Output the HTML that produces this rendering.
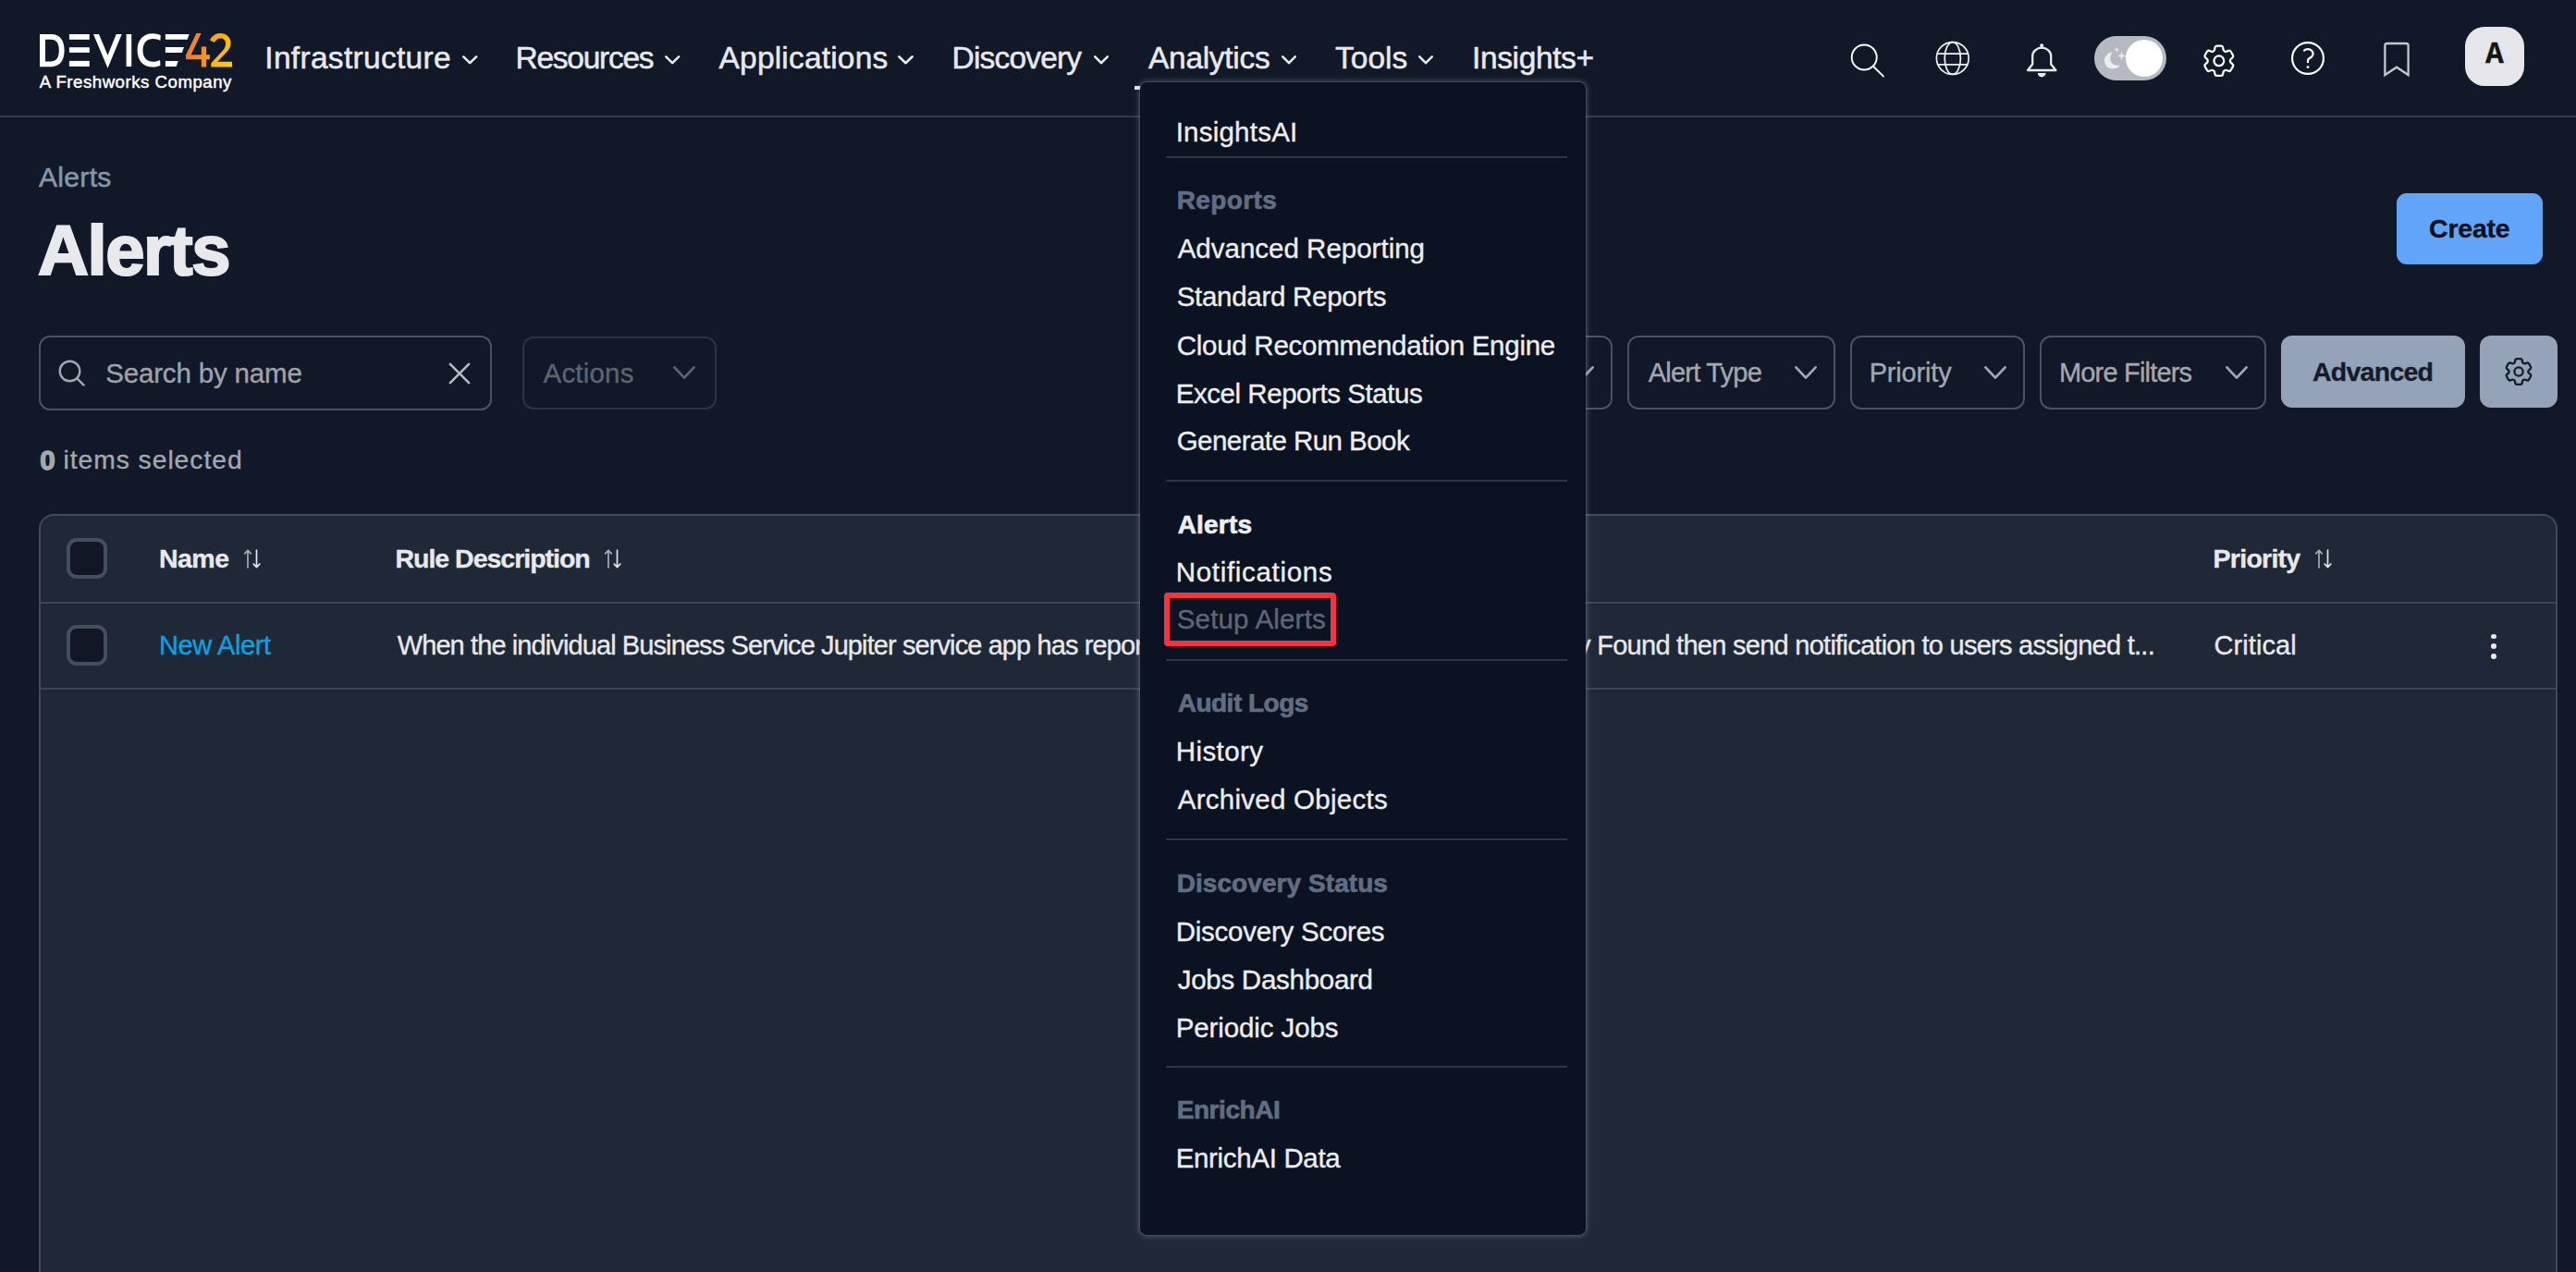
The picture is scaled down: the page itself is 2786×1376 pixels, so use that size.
<!DOCTYPE html>
<html><head><meta charset="utf-8"><title>Alerts</title>
<style>
html,body{margin:0;padding:0;}
body{width:2786px;height:1376px;overflow:hidden;position:relative;background:#111827;font-family:"Liberation Sans", sans-serif;-webkit-text-stroke-width:0.35px;}
</style></head><body>
<div style="position:absolute;left:0px;top:125px;width:2786px;height:2px;background:#343a47"></div>
<svg style="position:absolute;left:40px;top:34px;" width="215" height="42" viewBox="40 34 215 42" fill="none">
<path d="M43 37 H55.5 C65 37 69.6 44 69.6 54.6 C69.6 65.2 65 72.2 55.5 72.2 H43 Z M49 42.7 V66.4 H55.3 C61 66.4 63.8 62.5 63.8 54.6 C63.8 46.7 61 42.7 55.3 42.7 Z" fill="#fff" fill-rule="evenodd"/>
<rect x="74.9" y="37" width="21.9" height="5.8" fill="#fff"/>
<rect x="74.9" y="51.2" width="21.9" height="5.7" fill="#fff"/>
<rect x="74.9" y="65.9" width="21.9" height="6" fill="#fff"/>
<path d="M101 37 H107 L116.5 59.8 L125.7 37 H131.7 L116.5 73.8 Z" fill="#fff"/>
<rect x="136.6" y="37" width="5.6" height="35" fill="#fff"/>
<path d="M173.8 38.2 C171.2 37 168.4 36.3 165.3 36.3 C154.5 36.3 148.6 43.8 148.6 54.5 C148.6 65.2 154.5 72.6 165.3 72.6 C168.3 72.6 171 72 173.4 70.8 L173.1 65 C171 66.1 168.5 66.8 165.8 66.8 C158.6 66.8 154.5 62.4 154.5 54.5 C154.5 46.6 158.6 42.1 165.8 42.1 C168.6 42.1 171.2 42.8 173.3 43.9 Z" fill="#fff"/>
<path d="M178.9 37 H204.7 L202.6 42.8 H178.9 Z" fill="#fff"/>
<path d="M178.9 51 H199 L196.8 56.9 H178.9 Z" fill="#fff"/>
<path d="M178.9 66.1 H192.9 L190.5 71.9 H178.9 Z" fill="#fff"/>
<path d="M212.4 36 H217.6 L206.6 59.3 H217.8 V50.5 H223.1 V59.3 H226.9 V64.2 H223.1 V72.6 H217.8 V64.2 H201 V59.6 Z" fill="url(#lg4)"/>
<path d="M227 43.4 C229 38.6 233.4 36 238.6 36 C245 36 249.6 40.2 249.6 46.5 C249.6 51 247.6 54 244 57.4 L235.2 66.8 H251 V72.6 H228.3 V68.2 L240.2 55.6 C243 52.6 244 50.5 244 47.3 C244 43.5 241.6 41.6 238.5 41.6 C235.5 41.6 233.5 43.2 232 46 Z" fill="url(#lg2)"/>
<defs><linearGradient id="lg4" x1="0" y1="0" x2="1" y2="0"><stop offset="0" stop-color="#f07628"/><stop offset="1" stop-color="#f49a28"/></linearGradient>
<linearGradient id="lg2" x1="0" y1="0" x2="1" y2="1"><stop offset="0" stop-color="#f5a01c"/><stop offset="1" stop-color="#fbcf10"/></linearGradient></defs>
</svg>
<div style="position:absolute;left:42.80px;top:80.49px;font-size:18.6px;line-height:18.6px;font-weight:400;color:#ffffff;white-space:nowrap;letter-spacing:0.537px;-webkit-text-stroke:0.45px #ffffff;">A Freshworks Company</div>
<div style="position:absolute;left:286.30px;top:46.03px;font-size:33.5px;line-height:33.5px;font-weight:400;color:#e8e9ec;white-space:nowrap;letter-spacing:0.308px;-webkit-text-stroke:0.5px #e8e9ec;">Infrastructure</div>
<svg style="position:absolute;left:497.5px;top:58px;" width="20.5" height="13.5" viewBox="0 0 20.5 13.5" fill="none"><polyline points="3.3,3.3 10.25,10.2 17.2,3.3" stroke="#e8e9ec" stroke-width="2.6" stroke-linecap="round" stroke-linejoin="round"/></svg>
<div style="position:absolute;left:557.50px;top:46.03px;font-size:33.5px;line-height:33.5px;font-weight:400;color:#e8e9ec;white-space:nowrap;letter-spacing:-1.250px;-webkit-text-stroke:0.5px #e8e9ec;">Resources</div>
<svg style="position:absolute;left:716.6px;top:58px;" width="20.399999999999977" height="13.5" viewBox="0 0 20.399999999999977 13.5" fill="none"><polyline points="3.3,3.3 10.199999999999989,10.2 17.099999999999977,3.3" stroke="#e8e9ec" stroke-width="2.6" stroke-linecap="round" stroke-linejoin="round"/></svg>
<div style="position:absolute;left:777.60px;top:46.03px;font-size:33.5px;line-height:33.5px;font-weight:400;color:#e8e9ec;white-space:nowrap;letter-spacing:0.182px;-webkit-text-stroke:0.5px #e8e9ec;">Applications</div>
<svg style="position:absolute;left:969px;top:58px;" width="21" height="13.5" viewBox="0 0 21 13.5" fill="none"><polyline points="3.3,3.3 10.5,10.2 17.7,3.3" stroke="#e8e9ec" stroke-width="2.6" stroke-linecap="round" stroke-linejoin="round"/></svg>
<div style="position:absolute;left:1029.60px;top:46.03px;font-size:33.5px;line-height:33.5px;font-weight:400;color:#e8e9ec;white-space:nowrap;letter-spacing:-0.825px;-webkit-text-stroke:0.5px #e8e9ec;">Discovery</div>
<svg style="position:absolute;left:1181px;top:58px;" width="20" height="13.5" viewBox="0 0 20 13.5" fill="none"><polyline points="3.3,3.3 10.0,10.2 16.7,3.3" stroke="#e8e9ec" stroke-width="2.6" stroke-linecap="round" stroke-linejoin="round"/></svg>
<div style="position:absolute;left:1242.00px;top:46.03px;font-size:33.5px;line-height:33.5px;font-weight:400;color:#e8e9ec;white-space:nowrap;letter-spacing:-0.300px;-webkit-text-stroke:0.5px #e8e9ec;">Analytics</div>
<svg style="position:absolute;left:1383.7px;top:58px;" width="20.0" height="13.5" viewBox="0 0 20.0 13.5" fill="none"><polyline points="3.3,3.3 10.0,10.2 16.7,3.3" stroke="#e8e9ec" stroke-width="2.6" stroke-linecap="round" stroke-linejoin="round"/></svg>
<div style="position:absolute;left:1444.00px;top:46.03px;font-size:33.5px;line-height:33.5px;font-weight:400;color:#e8e9ec;white-space:nowrap;-webkit-text-stroke:0.5px #e8e9ec;">Tools</div>
<svg style="position:absolute;left:1532px;top:58px;" width="20" height="13.5" viewBox="0 0 20 13.5" fill="none"><polyline points="3.3,3.3 10.0,10.2 16.7,3.3" stroke="#e8e9ec" stroke-width="2.6" stroke-linecap="round" stroke-linejoin="round"/></svg>
<div style="position:absolute;left:1592.00px;top:46.03px;font-size:33.5px;line-height:33.5px;font-weight:400;color:#e8e9ec;white-space:nowrap;letter-spacing:-0.375px;-webkit-text-stroke:0.5px #e8e9ec;">Insights+</div>
<div style="position:absolute;left:1227px;top:93px;width:190px;height:4px;background:#e8e9ec"></div>
<svg style="position:absolute;left:1995px;top:43px;" width="50" height="45" viewBox="0 0 50 45" fill="none"><circle cx="21.2" cy="19" r="13.5" stroke="#fff" stroke-width="1.9"/><line x1="31" y1="28.8" x2="42" y2="39.6" stroke="#fff" stroke-width="1.9" stroke-linecap="round"/></svg>
<svg style="position:absolute;left:2090px;top:42px;" width="44" height="44" viewBox="0 0 44 44" fill="none"><circle cx="21.8" cy="21" r="17.4" stroke="#f0f0f2" stroke-width="1.7"/><ellipse cx="21.8" cy="21" rx="8.6" ry="17.4" stroke="#f0f0f2" stroke-width="1.7"/><path d="M5.2 16.2 H38.4 M5.2 27.8 H38.4" stroke="#f0f0f2" stroke-width="1.7"/></svg>
<svg style="position:absolute;left:2190px;top:45px;" width="38" height="42" viewBox="0 0 38 42" fill="none"><path d="M8.2 24.5 V15.5 A10 8.8 0 0 1 28.2 15.5 V24.5 L33.4 31 H3 Z" stroke="#ececee" stroke-width="2.3" stroke-linejoin="round"/><path d="M13.8 34 H22.6 A4.4 4.4 0 0 1 13.8 34 Z" fill="#ececee"/><circle cx="18.2" cy="4.3" r="2" fill="#ececee"/></svg>
<div style="position:absolute;left:2264.6px;top:39px;width:78.6px;height:48px;background:#b5b9c1;border-radius:24px"></div>
<div style="position:absolute;left:2298.9px;top:43px;width:40.3px;height:40.3px;border-radius:50%;background:#ffffff"></div>
<svg style="position:absolute;left:2270px;top:46px;" width="32" height="32" viewBox="0 0 32 32" fill="none"><path d="M14.8 10 C10 10.8 6 14.8 6 19.6 C6 24.6 10 28.6 15 28.6 C18.5 28.6 21.3 26.8 22.6 24.2 C21.7 24.5 20.8 24.7 19.8 24.7 C15.6 24.7 12.4 21.4 12.4 17.2 C12.4 14.5 13.3 12 14.8 10 Z" fill="#ebecef"/><path d="M24.5 9.5 L25.6 13.3 L29.2 14.4 L25.6 15.5 L24.5 19.3 L23.4 15.5 L19.8 14.4 L23.4 13.3 Z" fill="#ebecef"/><path d="M19.4 4.6 L20.1 6.9 L22.4 7.6 L20.1 8.3 L19.4 10.6 L18.7 8.3 L16.4 7.6 L18.7 6.9 Z" fill="#ebecef"/></svg>
<svg style="position:absolute;left:2381.4px;top:46.6px;" width="37.7" height="37.7" viewBox="1.5 1.5 21 21" fill="none"><path d="M9.594 3.94c.09-.542.56-.94 1.11-.94h2.593c.55 0 1.02.398 1.11.94l.213 1.281c.063.374.313.686.645.87.074.04.147.083.22.127.325.196.72.257 1.075.124l1.217-.456a1.125 1.125 0 0 1 1.37.49l1.296 2.247a1.125 1.125 0 0 1-.26 1.431l-1.003.827c-.293.241-.438.613-.43.992a7.723 7.723 0 0 1 0 .255c-.008.378.137.75.43.991l1.004.827c.424.35.534.955.26 1.43l-1.298 2.247a1.125 1.125 0 0 1-1.369.491l-1.217-.456c-.355-.133-.75-.072-1.076.124a6.47 6.47 0 0 1-.22.128c-.331.183-.581.495-.644.869l-.213 1.281c-.09.543-.56.94-1.11.94h-2.594c-.55 0-1.019-.398-1.11-.94l-.213-1.281c-.062-.374-.312-.686-.644-.87a6.52 6.52 0 0 1-.22-.127c-.325-.196-.72-.257-1.076-.124l-1.217.456a1.125 1.125 0 0 1-1.369-.49l-1.297-2.247a1.125 1.125 0 0 1 .26-1.431l1.004-.827c.292-.24.437-.613.43-.991a6.932 6.932 0 0 1 0-.255c.007-.38-.138-.751-.43-.992l-1.004-.827a1.125 1.125 0 0 1-.26-1.43l1.297-2.247a1.125 1.125 0 0 1 1.37-.491l1.216.456c.356.133.751.072 1.076-.124.072-.044.146-.086.22-.128.332-.183.582-.495.644-.869l.214-1.28Z" stroke="#fff" stroke-width="1.25" stroke-linejoin="round"/><path d="M15 12a3 3 0 1 1-6 0 3 3 0 0 1 6 0Z" stroke="#fff" stroke-width="1.25"/></svg>
<svg style="position:absolute;left:2477px;top:44.25px;" width="38" height="38" viewBox="1.9 1.9 20.2 20.2" fill="none"><path d="M9.879 7.519c1.171-1.025 3.071-1.025 4.242 0 1.172 1.025 1.172 2.687 0 3.712-.203.179-.43.326-.67.442-.745.361-1.45.999-1.45 1.827v.75" stroke="#fff" stroke-width="1.2" stroke-linecap="round" stroke-linejoin="round"/><path d="M21 12a9 9 0 1 1-18 0 9 9 0 0 1 18 0Z" stroke="#fff" stroke-width="1.15"/><circle cx="12" cy="17.1" r="0.75" fill="#fff"/></svg>
<svg style="position:absolute;left:2576px;top:43.5px;" width="32" height="40" viewBox="0 0 32 40" fill="none"><path d="M3.4 5.2 C3.4 3.6 4.4 3 5.8 3 H26.2 C27.6 3 28.6 3.6 28.6 5.2 V37 L16 28.7 L3.4 37 Z" stroke="#c6c7c9" stroke-width="2.3" stroke-linejoin="miter"/></svg>
<div style="position:absolute;left:2665.6px;top:28.7px;width:64.4px;height:64.3px;background:#e5e7eb;border-radius:21px"></div>
<div style="position:absolute;left:2665.6px;top:40px;width:64.4px;height:40px;text-align:center;font-family:'Liberation Mono',monospace;font-weight:700;font-size:33px;line-height:40px;color:#151515">A</div>
<div style="position:absolute;left:42.00px;top:176.70px;font-size:30px;line-height:30px;font-weight:400;color:#8796a3;white-space:nowrap;letter-spacing:0.320px;-webkit-text-stroke-width:0.6px;">Alerts</div>
<div style="position:absolute;left:41.00px;top:233.40px;font-size:76px;line-height:76px;font-weight:700;color:#e8e9ec;white-space:nowrap;letter-spacing:-1.400px;-webkit-text-stroke:2.2px #e8e9ec;">Alerts</div>
<div style="position:absolute;left:2592px;top:209px;width:158px;height:77px;background:#60a5fa;border-radius:11px"></div>
<div style="position:absolute;left:2627.00px;top:232.97px;font-size:28.5px;line-height:28.5px;font-weight:700;color:#0c111b;white-space:nowrap;letter-spacing:-0.200px;">Create</div>
<div style="position:absolute;left:42px;top:363px;width:490px;height:81px;box-sizing:border-box;border:2px solid #4a5361;border-radius:12px"></div>
<svg style="position:absolute;left:60.5px;top:387.3px;" width="34" height="34" viewBox="0 0 34 34" fill="none"><circle cx="14.5" cy="14.5" r="10.8" stroke="#a3a8b0" stroke-width="2.4"/><line x1="22.3" y1="22.3" x2="29.6" y2="29.6" stroke="#a3a8b0" stroke-width="2.4" stroke-linecap="round"/></svg>
<div style="position:absolute;left:114.20px;top:388.62px;font-size:29.5px;line-height:29.5px;font-weight:400;color:#9ea3ab;white-space:nowrap;letter-spacing:-0.169px;">Search by name</div>
<svg style="position:absolute;left:484px;top:391px;" width="26" height="26" viewBox="0 0 26 26" fill="none"><path d="M2.9 2.9 L23.1 23.1 M23.1 2.9 L2.9 23.1" stroke="#b8bbc1" stroke-width="2.6" stroke-linecap="round"/></svg>
<div style="position:absolute;left:565px;top:363.5px;width:209.5px;height:79.5px;box-sizing:border-box;border:2px solid #2c3441;border-radius:12px"></div>
<div style="position:absolute;left:587.50px;top:388.62px;font-size:29.5px;line-height:29.5px;font-weight:400;color:#5d6470;white-space:nowrap;letter-spacing:0.200px;">Actions</div>
<svg style="position:absolute;left:726px;top:394px;" width="28" height="18" viewBox="0 0 28 18" fill="none"><polyline points="3.4,3.4 14.0,14.6 24.6,3.4" stroke="#5d6470" stroke-width="2.8" stroke-linecap="round" stroke-linejoin="round"/></svg>
<div style="position:absolute;left:1500px;top:363px;width:243.5px;height:79.5px;box-sizing:border-box;border:2px solid #4a5361;border-radius:12px"></div>
<svg style="position:absolute;left:1698px;top:394px;" width="28" height="18" viewBox="0 0 28 18" fill="none"><polyline points="3.4,3.4 14.0,14.6 24.6,3.4" stroke="#a3a8b0" stroke-width="2.8" stroke-linecap="round" stroke-linejoin="round"/></svg>
<div style="position:absolute;left:1760px;top:363px;width:224.5999999999999px;height:79.5px;box-sizing:border-box;border:2px solid #4a5361;border-radius:12px"></div>
<div style="position:absolute;left:1782.70px;top:388.75px;font-size:29px;line-height:29px;font-weight:400;color:#a3a8b0;white-space:nowrap;letter-spacing:-0.767px;">Alert Type</div>
<svg style="position:absolute;left:1939px;top:394px;" width="28" height="18" viewBox="0 0 28 18" fill="none"><polyline points="3.4,3.4 14.0,14.6 24.6,3.4" stroke="#a3a8b0" stroke-width="2.8" stroke-linecap="round" stroke-linejoin="round"/></svg>
<div style="position:absolute;left:2001px;top:363px;width:188.5999999999999px;height:79.5px;box-sizing:border-box;border:2px solid #4a5361;border-radius:12px"></div>
<div style="position:absolute;left:2021.70px;top:388.75px;font-size:29px;line-height:29px;font-weight:400;color:#a3a8b0;white-space:nowrap;letter-spacing:-0.171px;">Priority</div>
<svg style="position:absolute;left:2143.8px;top:394px;" width="28.0" height="18" viewBox="0 0 28.0 18" fill="none"><polyline points="3.4,3.4 14.0,14.6 24.6,3.4" stroke="#a3a8b0" stroke-width="2.8" stroke-linecap="round" stroke-linejoin="round"/></svg>
<div style="position:absolute;left:2206.2px;top:363px;width:244.80000000000018px;height:79.5px;box-sizing:border-box;border:2px solid #4a5361;border-radius:12px"></div>
<div style="position:absolute;left:2226.90px;top:388.75px;font-size:29px;line-height:29px;font-weight:400;color:#a3a8b0;white-space:nowrap;letter-spacing:-0.809px;">More Filters</div>
<svg style="position:absolute;left:2405px;top:394px;" width="28" height="18" viewBox="0 0 28 18" fill="none"><polyline points="3.4,3.4 14.0,14.6 24.6,3.4" stroke="#a3a8b0" stroke-width="2.8" stroke-linecap="round" stroke-linejoin="round"/></svg>
<div style="position:absolute;left:2467px;top:363px;width:199px;height:78px;background:#94a3b8;border-radius:12px"></div>
<div style="position:absolute;left:2501.00px;top:387.97px;font-size:28.5px;line-height:28.5px;font-weight:700;color:#161c27;white-space:nowrap;letter-spacing:-0.743px;">Advanced</div>
<div style="position:absolute;left:2682px;top:363px;width:84px;height:78px;background:#94a3b8;border-radius:12px"></div>
<svg style="position:absolute;left:2707px;top:385px;" width="34" height="34" viewBox="1 1 22 22" fill="none"><path d="M9.594 3.94c.09-.542.56-.94 1.11-.94h2.593c.55 0 1.02.398 1.11.94l.213 1.281c.063.374.313.686.645.87.074.04.147.083.22.127.325.196.72.257 1.075.124l1.217-.456a1.125 1.125 0 0 1 1.37.49l1.296 2.247a1.125 1.125 0 0 1-.26 1.431l-1.003.827c-.293.241-.438.613-.43.992a7.723 7.723 0 0 1 0 .255c-.008.378.137.75.43.991l1.004.827c.424.35.534.955.26 1.43l-1.298 2.247a1.125 1.125 0 0 1-1.369.491l-1.217-.456c-.355-.133-.75-.072-1.076.124a6.47 6.47 0 0 1-.22.128c-.331.183-.581.495-.644.869l-.213 1.281c-.09.543-.56.94-1.11.94h-2.594c-.55 0-1.019-.398-1.11-.94l-.213-1.281c-.062-.374-.312-.686-.644-.87a6.52 6.52 0 0 1-.22-.127c-.325-.196-.72-.257-1.076-.124l-1.217.456a1.125 1.125 0 0 1-1.369-.49l-1.297-2.247a1.125 1.125 0 0 1 .26-1.431l1.004-.827c.292-.24.437-.613.43-.991a6.932 6.932 0 0 1 0-.255c.007-.38-.138-.751-.43-.992l-1.004-.827a1.125 1.125 0 0 1-.26-1.43l1.297-2.247a1.125 1.125 0 0 1 1.37-.491l1.216.456c.356.133.751.072 1.076-.124.072-.044.146-.086.22-.128.332-.183.582-.495.644-.869l.214-1.28Z" stroke="#161c27" stroke-width="1.5" stroke-linejoin="round"/><path d="M15 12a3 3 0 1 1-6 0 3 3 0 0 1 6 0Z" stroke="#161c27" stroke-width="1.5"/></svg>
<div style="position:absolute;left:43.20px;top:482.73px;font-size:29.5px;line-height:29.5px;font-weight:700;color:#a3a8b0;white-space:nowrap;-webkit-text-stroke-width:1.4px;">0</div>
<div style="position:absolute;left:68.40px;top:483.44px;font-size:28.3px;line-height:28.3px;font-weight:400;color:#a3a8b0;white-space:nowrap;letter-spacing:0.954px;">items selected</div>
<div style="position:absolute;left:42px;top:556px;width:2724px;height:900px;box-sizing:border-box;background:#1f2836;border:2px solid #414a57;border-radius:16px"></div>
<div style="position:absolute;left:44px;top:651px;width:2720px;height:2px;background:#3d4653"></div>
<div style="position:absolute;left:44px;top:744px;width:2720px;height:2px;background:#3d4653"></div>
<div style="position:absolute;left:72px;top:582px;width:44px;height:44px;box-sizing:border-box;background:#111725;border:4px solid #454e5b;border-radius:11px"></div>
<div style="position:absolute;left:72px;top:676px;width:44px;height:44px;box-sizing:border-box;background:#111725;border:4px solid #454e5b;border-radius:11px"></div>
<div style="position:absolute;left:172.00px;top:589.77px;font-size:28.5px;line-height:28.5px;font-weight:700;color:#e8e9ec;white-space:nowrap;letter-spacing:-0.533px;">Name</div>
<svg style="position:absolute;left:262.5px;top:593.5px;" width="20" height="22" viewBox="0 0 20 22" fill="none"><path d="M5 20 V1.4 M1.7 4.9 L5 1.4 L8.3 4.9" stroke="#a6abb3" stroke-width="1.7" stroke-linecap="round" stroke-linejoin="round"/><path d="M14.5 1 V19.6 M11.2 16.1 L14.5 19.6 L17.8 16.1" stroke="#e4e5e8" stroke-width="1.7" stroke-linecap="round" stroke-linejoin="round"/></svg>
<div style="position:absolute;left:427.50px;top:589.77px;font-size:28.5px;line-height:28.5px;font-weight:700;color:#e8e9ec;white-space:nowrap;letter-spacing:-1.013px;">Rule Description</div>
<svg style="position:absolute;left:652.5px;top:593.5px;" width="20" height="22" viewBox="0 0 20 22" fill="none"><path d="M5 20 V1.4 M1.7 4.9 L5 1.4 L8.3 4.9" stroke="#a6abb3" stroke-width="1.7" stroke-linecap="round" stroke-linejoin="round"/><path d="M14.5 1 V19.6 M11.2 16.1 L14.5 19.6 L17.8 16.1" stroke="#e4e5e8" stroke-width="1.7" stroke-linecap="round" stroke-linejoin="round"/></svg>
<div style="position:absolute;left:2393.60px;top:589.77px;font-size:28.5px;line-height:28.5px;font-weight:700;color:#e8e9ec;white-space:nowrap;letter-spacing:-0.743px;">Priority</div>
<svg style="position:absolute;left:2503px;top:593.5px;" width="20" height="22" viewBox="0 0 20 22" fill="none"><path d="M5 20 V1.4 M1.7 4.9 L5 1.4 L8.3 4.9" stroke="#a6abb3" stroke-width="1.7" stroke-linecap="round" stroke-linejoin="round"/><path d="M14.5 1 V19.6 M11.2 16.1 L14.5 19.6 L17.8 16.1" stroke="#e4e5e8" stroke-width="1.7" stroke-linecap="round" stroke-linejoin="round"/></svg>
<div style="position:absolute;left:172.00px;top:683.55px;font-size:29px;line-height:29px;font-weight:400;color:#0aa2e6;white-space:nowrap;letter-spacing:-0.375px;">New Alert</div>
<div style="position:absolute;left:420px;top:660px;width:813px;height:70px;overflow:hidden"><div style="position:absolute;left:9.7px;top:23.65px;font-size:29px;line-height:29px;white-space:nowrap;color:#e8e9ec;letter-spacing:-0.9px">When the individual Business Service Jupiter service app has reported a new status</div></div>
<div style="position:absolute;left:1500px;top:660px;width:830px;height:70px;overflow:hidden"><div style="position:absolute;right:0;top:23.65px;font-size:29px;line-height:29px;white-space:nowrap;color:#e8e9ec;letter-spacing:-0.73px">is Discrepancy Found then send notification to users assigned t...</div></div>
<div style="position:absolute;left:2394.60px;top:683.65px;font-size:29px;line-height:29px;font-weight:400;color:#e8e9ec;white-space:nowrap;letter-spacing:0.057px;">Critical</div>
<div style="position:absolute;left:2694.1px;top:685.6px;width:5.8px;height:5.8px;border-radius:50%;background:#e8e9ec"></div>
<div style="position:absolute;left:2694.1px;top:696.3000000000001px;width:5.8px;height:5.8px;border-radius:50%;background:#e8e9ec"></div>
<div style="position:absolute;left:2694.1px;top:707.1px;width:5.8px;height:5.8px;border-radius:50%;background:#e8e9ec"></div>
<div style="position:absolute;left:1233px;top:88.8px;width:482px;height:1247.6px;box-sizing:border-box;background:#0b1322;border-radius:7px;box-shadow:0 0 0 0.5px rgba(120,128,142,0.45),0 0 6px 1px rgba(150,158,172,0.45)"></div>
<div style="position:absolute;left:1271.70px;top:127.92px;font-size:29.5px;line-height:29.5px;font-weight:400;color:#eceef1;white-space:nowrap;letter-spacing:0.222px;">InsightsAI</div>
<div style="position:absolute;left:1261px;top:168.8px;width:434px;height:2px;background:#2f3643"></div>
<div style="position:absolute;left:1272.70px;top:203.20px;font-size:28px;line-height:28px;font-weight:700;color:#616d80;white-space:nowrap;letter-spacing:0.383px;-webkit-text-stroke-width:0.7px;">Reports</div>
<div style="position:absolute;left:1273.70px;top:254.12px;font-size:29.5px;line-height:29.5px;font-weight:400;color:#eceef1;white-space:nowrap;">Advanced Reporting</div>
<div style="position:absolute;left:1272.70px;top:305.93px;font-size:29.5px;line-height:29.5px;font-weight:400;color:#eceef1;white-space:nowrap;letter-spacing:-0.287px;">Standard Reports</div>
<div style="position:absolute;left:1272.70px;top:358.82px;font-size:29.5px;line-height:29.5px;font-weight:400;color:#eceef1;white-space:nowrap;letter-spacing:-0.269px;">Cloud Recommendation Engine</div>
<div style="position:absolute;left:1271.70px;top:410.53px;font-size:29.5px;line-height:29.5px;font-weight:400;color:#eceef1;white-space:nowrap;letter-spacing:-0.447px;">Excel Reports Status</div>
<div style="position:absolute;left:1272.70px;top:461.93px;font-size:29.5px;line-height:29.5px;font-weight:400;color:#eceef1;white-space:nowrap;letter-spacing:-0.544px;">Generate Run Book</div>
<div style="position:absolute;left:1261px;top:518.8px;width:434px;height:2px;background:#2f3643"></div>
<div style="position:absolute;left:1273.70px;top:553.70px;font-size:28px;line-height:28px;font-weight:700;color:#eceef1;white-space:nowrap;letter-spacing:0.200px;-webkit-text-stroke-width:0.7px;">Alerts</div>
<div style="position:absolute;left:1271.70px;top:604.02px;font-size:29.5px;line-height:29.5px;font-weight:400;color:#eceef1;white-space:nowrap;letter-spacing:0.692px;">Notifications</div>
<div style="position:absolute;left:1272.70px;top:655.42px;font-size:29.5px;line-height:29.5px;font-weight:400;color:#5f6775;white-space:nowrap;letter-spacing:0.182px;">Setup Alerts</div>
<div style="position:absolute;left:1261px;top:712.8px;width:434px;height:2px;background:#2f3643"></div>
<div style="position:absolute;left:1273.70px;top:747.00px;font-size:28px;line-height:28px;font-weight:700;color:#616d80;white-space:nowrap;letter-spacing:-0.500px;-webkit-text-stroke-width:0.7px;">Audit Logs</div>
<div style="position:absolute;left:1271.70px;top:798.02px;font-size:29.5px;line-height:29.5px;font-weight:400;color:#eceef1;white-space:nowrap;letter-spacing:0.433px;">History</div>
<div style="position:absolute;left:1273.70px;top:849.92px;font-size:29.5px;line-height:29.5px;font-weight:400;color:#eceef1;white-space:nowrap;letter-spacing:0.267px;">Archived Objects</div>
<div style="position:absolute;left:1261px;top:907px;width:434px;height:2px;background:#2f3643"></div>
<div style="position:absolute;left:1272.70px;top:941.50px;font-size:28px;line-height:28px;font-weight:700;color:#616d80;white-space:nowrap;letter-spacing:0.067px;-webkit-text-stroke-width:0.7px;">Discovery Status</div>
<div style="position:absolute;left:1271.70px;top:992.92px;font-size:29.5px;line-height:29.5px;font-weight:400;color:#eceef1;white-space:nowrap;letter-spacing:-0.240px;">Discovery Scores</div>
<div style="position:absolute;left:1273.70px;top:1044.52px;font-size:29.5px;line-height:29.5px;font-weight:400;color:#eceef1;white-space:nowrap;letter-spacing:-0.269px;">Jobs Dashboard</div>
<div style="position:absolute;left:1271.70px;top:1096.52px;font-size:29.5px;line-height:29.5px;font-weight:400;color:#eceef1;white-space:nowrap;letter-spacing:-0.100px;">Periodic Jobs</div>
<div style="position:absolute;left:1261px;top:1152.7px;width:434px;height:2px;background:#2f3643"></div>
<div style="position:absolute;left:1272.70px;top:1187.40px;font-size:28px;line-height:28px;font-weight:700;color:#616d80;white-space:nowrap;letter-spacing:-0.429px;-webkit-text-stroke-width:0.7px;">EnrichAI</div>
<div style="position:absolute;left:1271.70px;top:1238.12px;font-size:29.5px;line-height:29.5px;font-weight:400;color:#eceef1;white-space:nowrap;letter-spacing:-0.333px;">EnrichAI Data</div>
<div style="position:absolute;left:1259px;top:641.2px;width:186.4px;height:57.5px;box-sizing:border-box;border:6.3px solid #f73341;border-radius:4px"></div>
</body></html>
